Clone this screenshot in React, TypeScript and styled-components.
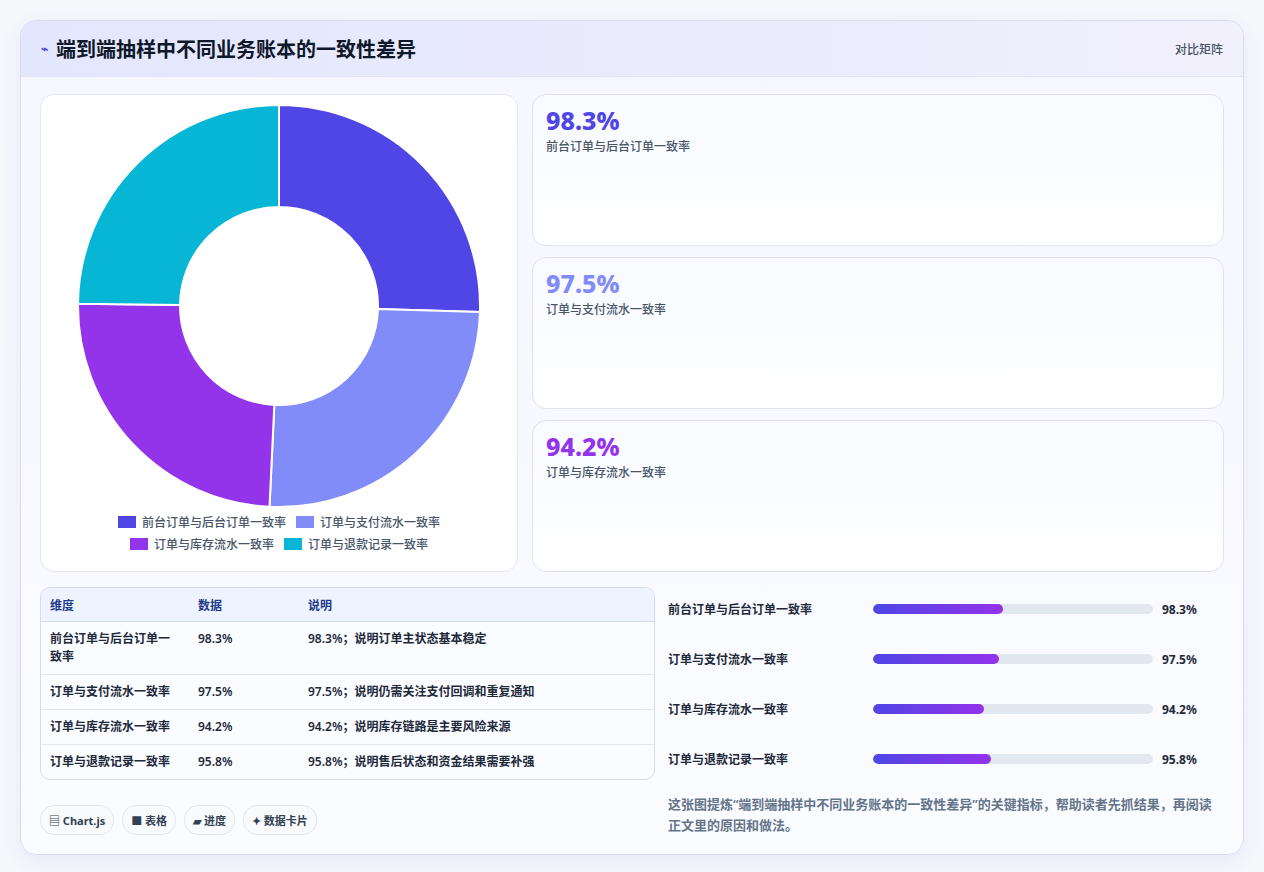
import React from 'react';
import styled, { createGlobalStyle } from 'styled-components';

const Global = createGlobalStyle`
  body { margin: 0; background: #f6f7fb; font-family: "Noto Sans", "Noto Sans CJK SC", sans-serif; color: #1e293b; }
`;

const items = [
  { label: '前台订单与后台订单一致率', value: 98.3, color: '#4f46e5', note: '说明订单主状态基本稳定' },
  { label: '订单与支付流水一致率', value: 97.5, color: '#818cf8', note: '说明仍需关注支付回调和重复通知' },
  { label: '订单与库存流水一致率', value: 94.2, color: '#9333ea', note: '说明库存链路是主要风险来源' },
  { label: '订单与退款记录一致率', value: 95.8, color: '#06b6d4', note: '说明售后状态和资金结果需要补强' },
];

function Donut() {
  const total = items.reduce((s, i) => s + i.value, 0);
  const cx = 201, cy = 201, R = 201, r = 99;
  let a = -Math.PI / 2;
  const pt = (rad: number, ang: number) => `${cx + rad * Math.cos(ang)} ${cy + rad * Math.sin(ang)}`;
  return (
    <svg width="402" height="402" viewBox="0 0 402 402">
      {items.map((it) => {
        const a0 = a;
        const a1 = a + (it.value / total) * Math.PI * 2;
        a = a1;
        return (
          <path
            key={it.label}
            d={`M ${pt(R, a0)} A ${R} ${R} 0 0 1 ${pt(R, a1)} L ${pt(r, a1)} A ${r} ${r} 0 0 0 ${pt(r, a0)} Z`}
            fill={it.color}
            stroke="#fff"
            strokeWidth="2"
          />
        );
      })}
    </svg>
  );
}

export default function App() {
  return (
    <Page>
      <Global />
      <Card>
        <Header>
          <Title><Bolt>⌁</Bolt>端到端抽样中不同业务账本的一致性差异</Title>
          <Tag>对比矩阵</Tag>
        </Header>
        <Body>
          <Top>
            <ChartPanel>
              <Donut />
              <Legend>
                {items.map((it) => (
                  <LegendItem key={it.label}><Swatch $c={it.color} />{it.label}</LegendItem>
                ))}
              </Legend>
            </ChartPanel>
            <Stats>
              {items.slice(0, 3).map((it) => (
                <Stat key={it.label}>
                  <StatValue $c={it.color}>{it.value}%</StatValue>
                  <StatLabel>{it.label}</StatLabel>
                </Stat>
              ))}
            </Stats>
          </Top>
          <Bottom>
            <LeftCol>
              <Table>
                <colgroup>
                  <col style={{ width: 148 }} />
                  <col style={{ width: 110 }} />
                  <col />
                </colgroup>
                <thead>
                  <tr><Th>维度</Th><Th>数据</Th><Th>说明</Th></tr>
                </thead>
                <tbody>
                  {items.map((it) => (
                    <tr key={it.label}>
                      <Td>{it.label}</Td>
                      <Td>{it.value}%</Td>
                      <Td>{it.value}%；{it.note}</Td>
                    </tr>
                  ))}
                </tbody>
              </Table>
              <Chips>
                <Chip>▤ Chart.js</Chip>
                <Chip>■ 表格</Chip>
                <Chip>▰ 进度</Chip>
                <Chip>✦ 数据卡片</Chip>
              </Chips>
            </LeftCol>
            <RightCol>
              {items.map((it) => (
                <BarRow key={it.label}>
                  <BarLabel>{it.label}</BarLabel>
                  <Track><Fill style={{ width: `${((it.value - 70) / 61) * 100}%` }} /></Track>
                  <BarValue>{it.value}%</BarValue>
                </BarRow>
              ))}
              <Summary>这张图提炼“端到端抽样中不同业务账本的一致性差异”的关键指标，帮助读者先抓结果，再阅读正文里的原因和做法。</Summary>
            </RightCol>
          </Bottom>
        </Body>
      </Card>
    </Page>
  );
}

const Page = styled.div`
  padding: 20px 20px 22px 20px;
`;
const Card = styled.div`
  width: 1222px;
  border: 1px solid #d9dcf5;
  border-radius: 16px;
  background: linear-gradient(180deg, #f5f6ff 0%, #fbfcff 100%);
  box-shadow: 0 6px 20px rgba(79, 70, 229, 0.08);
  overflow: hidden;
`;
const Header = styled.div`
  height: 55px;
  display: flex;
  align-items: center;
  justify-content: space-between;
  padding: 0 20px;
  background: linear-gradient(90deg, #e3e7fd 0%, #ebebfc 60%, #f2f0fd 100%);
  border-bottom: 1px solid #e1e4f7;
`;
const Title = styled.h1`
  margin: 0;
  font-size: 20px;
  font-weight: 700;
  color: #0f172a;
  display: flex;
  align-items: center;
  gap: 8px;
`;
const Bolt = styled.span`
  color: #4f46e5;
  font-size: 12px;
`;
const Tag = styled.span`
  font-size: 12px;
  font-weight: 500;
  color: #475569;
`;
const Body = styled.div`
  padding: 17px 19px 18px 19px;
`;
const Top = styled.div`
  display: flex;
  gap: 14px;
`;
const ChartPanel = styled.div`
  width: 478px;
  height: 478px;
  box-sizing: border-box;
  background: #fff;
  border: 1px solid #e2e8f0;
  border-radius: 14px;
  display: flex;
  flex-direction: column;
  align-items: center;
  padding-top: 10px;
`;
const Legend = styled.div`
  margin-top: 6px;
  width: 360px;
  display: flex;
  flex-wrap: wrap;
  justify-content: center;
  column-gap: 10px;
  row-gap: 4px;
`;
const LegendItem = styled.span`
  font-size: 12px;
  font-weight: 500;
  color: #475569;
  display: flex;
  align-items: center;
  gap: 6px;
`;
const Swatch = styled.span<{ $c: string }>`
  width: 18px;
  height: 12px;
  background: ${(p) => p.$c};
`;
const Stats = styled.div`
  flex: 1;
  display: flex;
  flex-direction: column;
  gap: 11px;
`;
const Stat = styled.div`
  flex: 1;
  border: 1px solid #dde3f3;
  border-radius: 14px;
  background: linear-gradient(180deg, #f8faff 0%, #ffffff 100%);
  padding: 10px 13px;
`;
const StatValue = styled.div<{ $c: string }>`
  font-size: 25px;
  font-weight: 800;
  line-height: 30px;
  color: ${(p) => p.$c};
`;
const StatLabel = styled.div`
  font-size: 12px;
  font-weight: 500;
  color: #475569;
  margin-top: 2px;
`;
const Bottom = styled.div`
  display: flex;
  gap: 13px;
  margin-top: 15px;
`;
const LeftCol = styled.div`
  width: 615px;
`;
const Table = styled.table`
  width: 100%;
  table-layout: fixed;
  border-collapse: separate;
  border-spacing: 0;
  border: 1px solid #d5dcea;
  border-radius: 10px;
  overflow: hidden;
  font-size: 12px;
  background: #fafcff;
`;
const Th = styled.th`
  text-align: left;
  font-weight: 700;
  color: #1e3a8a;
  background: #eef4ff;
  padding: 0 9px;
  height: 33px;
  border-bottom: 1px solid #d5dcea;
`;
const Td = styled.td`
  padding: 8px 9px;
  vertical-align: top;
  font-weight: 600;
  color: #1e293b;
  line-height: 18px;
  border-bottom: 1px solid #e2e8f0;
  tr:last-child & { border-bottom: none; }
`;
const Chips = styled.div`
  display: flex;
  gap: 8px;
  margin-top: 25px;
`;
const Chip = styled.span`
  height: 28px;
  padding: 0 8px;
  border: 1px solid #e2e8f0;
  border-radius: 14px;
  display: flex;
  align-items: center;
  font-size: 11px;
  font-weight: 700;
  color: #334155;
  background: #f8fafc;
`;
const RightCol = styled.div`
  flex: 1;
  padding-top: 8px;
`;
const BarRow = styled.div`
  display: flex;
  align-items: center;
  height: 50px;
  &:first-child { height: 28px; margin-bottom: 11px; }
`;
const BarLabel = styled.div`
  width: 205px;
  font-size: 12px;
  font-weight: 600;
  color: #1e293b;
`;
const Track = styled.div`
  width: 280px;
  height: 10px;
  border-radius: 5px;
  background: #e2e8f0;
  overflow: hidden;
`;
const Fill = styled.div`
  height: 100%;
  border-radius: 5px;
  background: linear-gradient(90deg, #4f46e5, #9333ea);
`;
const BarValue = styled.div`
  margin-left: 9px;
  font-size: 12px;
  font-weight: 700;
  color: #1e293b;
`;
const Summary = styled.p`
  margin: 10px 0 0;
  font-size: 13px;
  font-weight: 600;
  line-height: 21px;
  color: #64748b;
`;
